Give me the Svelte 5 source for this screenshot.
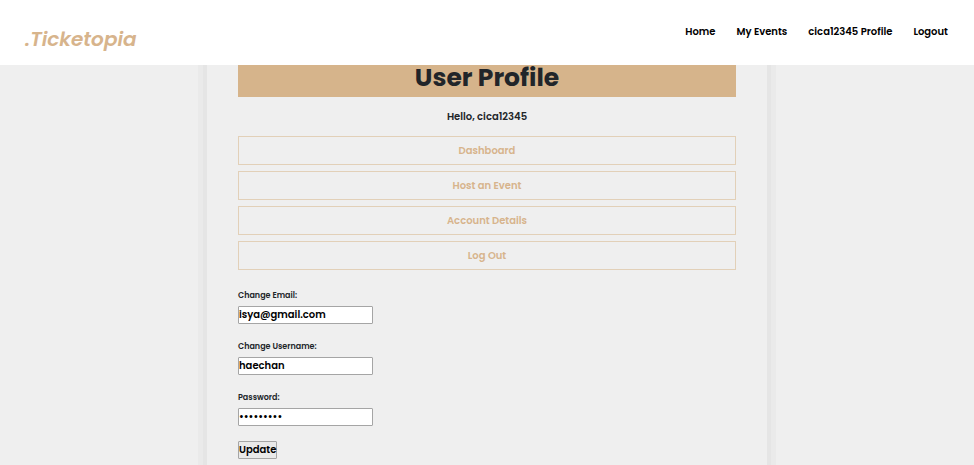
<script>
  const username = 'cica12345';
  const nav = ['Home', 'My Events', `${username} Profile`, 'Logout'];
  const actions = ['Dashboard', 'Host an Event', 'Account Details', 'Log Out'];
  let email = $state('isya@gmail.com');
  let newName = $state('haechan');
  let password = $state('ninechars');
</script>

<div class="page">
  <header>
    <a class="logo" href="#home">.Ticketopia</a>
    <nav>
      {#each nav as item}
        <a href="#{item}">{item}</a>
      {/each}
    </nav>
  </header>

  <main>
    <h1>User Profile</h1>
    <p class="hello">Hello, {username}</p>

    <div class="actions">
      {#each actions as action}
        <button type="button">{action}</button>
      {/each}
    </div>

    <form onsubmit={(e) => e.preventDefault()}>
      <label for="email">Change Email:</label>
      <input id="email" type="email" bind:value={email} />
      <label for="username">Change Username:</label>
      <input id="username" type="text" bind:value={newName} />
      <label for="password">Password:</label>
      <input id="password" type="password" bind:value={password} />
      <button type="submit">Update</button>
    </form>
  </main>
</div>

<style>
  :global(body) {
    margin: 0;
    background: #efefef;
  }
  .page {
    display: flex;
    flex-direction: column;
    height: 100vh;
    overflow: hidden;
    background: #efefef;
    color: #212529;
    font-family: Poppins, Inter, sans-serif;
    font-weight: 600;
  }
  header {
    position: relative;
    z-index: 1;
    flex: none;
    display: flex;
    justify-content: space-between;
    align-items: flex-start;
    padding: 24px 26px 11px 25px;
    background: #fff;
  }
  .logo {
    color: #d7b48c;
    font-size: 20px;
    line-height: 30px;
    font-style: italic;
    text-decoration: none;
  }
  nav {
    display: flex;
    gap: 21px;
  }
  nav a {
    color: #000;
    font-size: 10px;
    line-height: 15px;
    text-decoration: none;
  }
  main {
    flex: 1 0 auto;
    box-sizing: border-box;
    width: 100%;
    max-width: 560px;
    margin: 0 auto;
    padding: 0 31px;
    box-shadow: 0 0 0 4px #e5e5e5, 0 0 0 9px #eaeaea;
  }
  h1 {
    margin: 0;
    padding-bottom: 6px;
    background: #d6b48b;
    font-size: 25px;
    line-height: 26px;
    font-weight: 700;
    text-align: center;
  }
  .hello {
    margin: 12px 0;
    font-size: 10px;
    line-height: 15px;
    text-align: center;
  }
  .actions {
    display: flex;
    flex-direction: column;
    gap: 6px;
  }
  .actions button {
    height: 29px;
    padding: 0;
    border: 1px solid #e2d0b8;
    background: transparent;
    color: #d7b48c;
    font: inherit;
    font-size: 10px;
  }
  form {
    display: flex;
    flex-direction: column;
    align-items: flex-start;
    margin-top: 18px;
  }
  label {
    margin-bottom: 3px;
    font-size: 8px;
    line-height: 15px;
  }
  input,
  form button {
    box-sizing: border-box;
    height: 18px;
    padding: 0;
    border: 1px solid #a5a5a5;
    border-radius: 1px;
    color: #000;
    font: inherit;
    font-size: 10px;
  }
  input {
    width: 135px;
    margin-bottom: 15px;
    background: #fff;
  }
  form button {
    background: #e9e9e9;
  }
</style>
